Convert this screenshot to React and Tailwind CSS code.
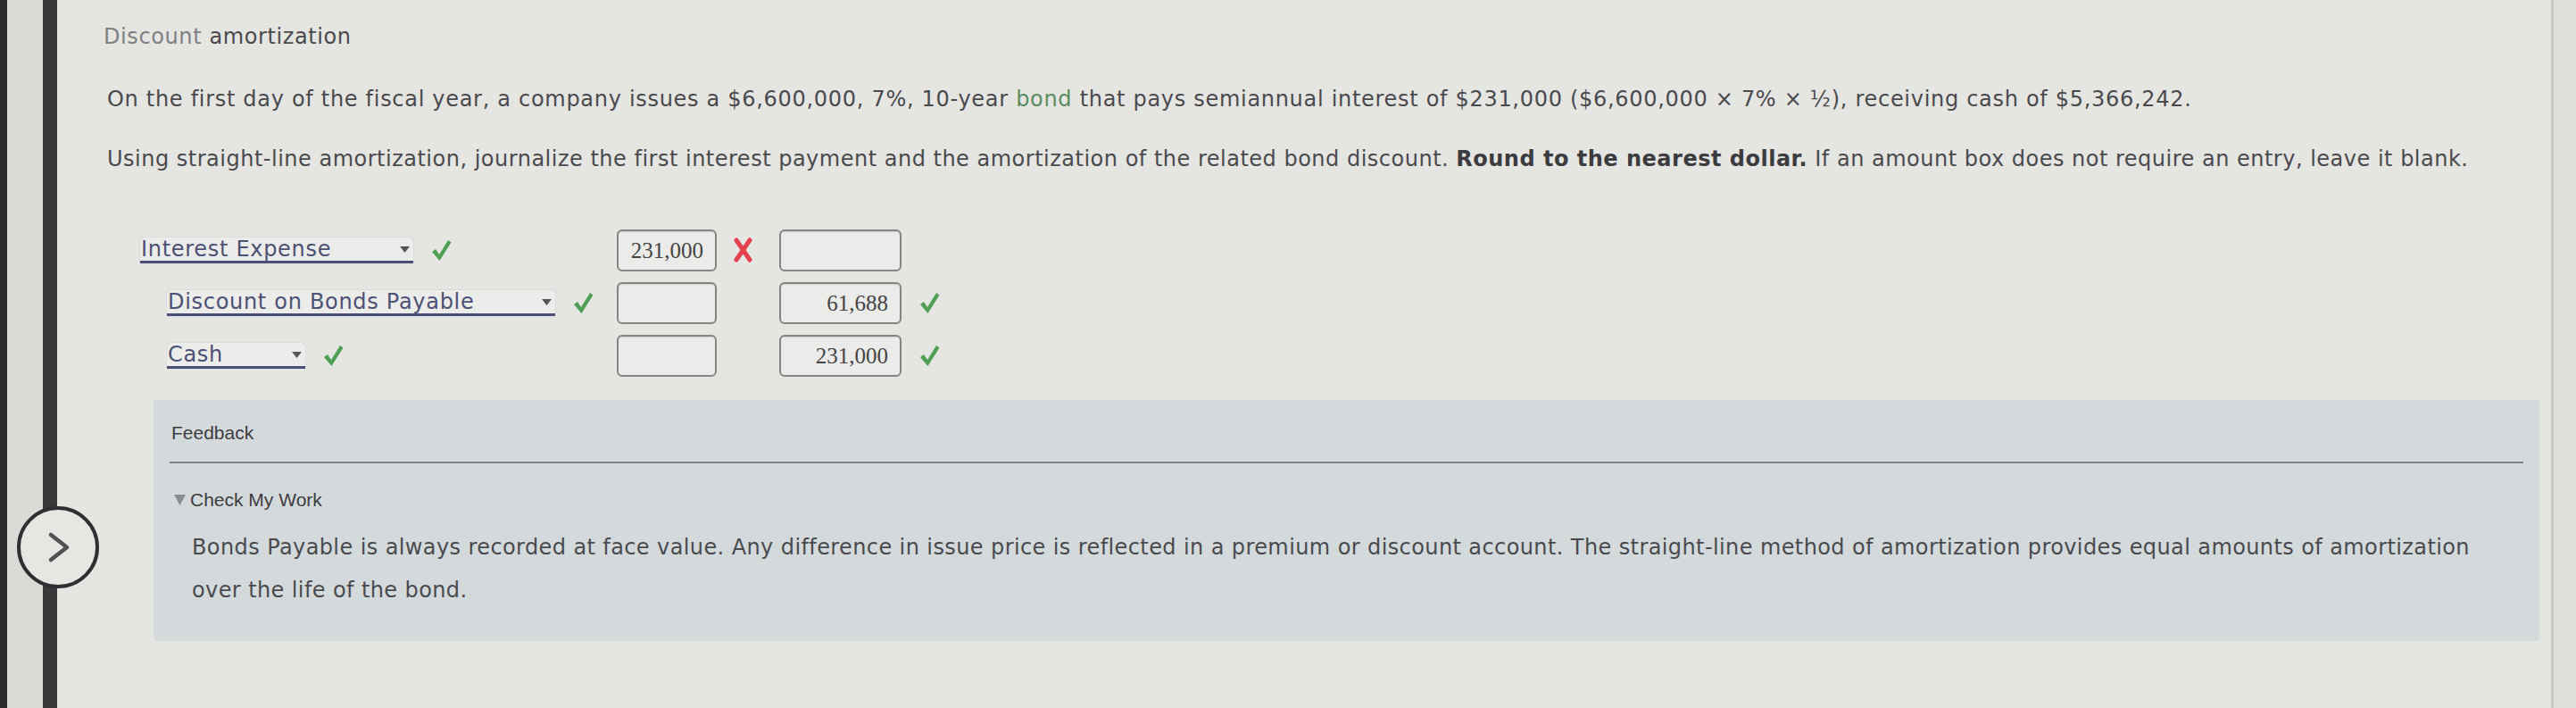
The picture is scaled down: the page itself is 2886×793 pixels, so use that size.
import React from "react";

const sans = { fontFamily: '"DejaVu Sans", Verdana, sans-serif' };
const arial = { fontFamily: '"Liberation Sans", Arial, sans-serif' };
const serif = { fontFamily: '"Liberation Serif", "Times New Roman", serif' };

function Check({ className = "" }) {
  return (
    <svg className={className} width="23" height="25" viewBox="0 0 23 25">
      <path d="M1 14 L5 11 L9 17 L19 1 L22.5 3.5 L9.5 24 Z" fill="#4f9f55" />
    </svg>
  );
}

function RedX({ className = "" }) {
  return (
    <svg className={className} width="21" height="28" viewBox="0 0 21 28">
      <path d="M3 3 L18 25 M18 3 L3 25" stroke="#e4404e" strokeWidth="5" strokeLinecap="round" />
    </svg>
  );
}

function Select({ label, width }) {
  return (
    <div
      className="relative flex items-center h-[29px] bg-[#ececeb] rounded-t-[4px] border-b-[3px] border-[#4b4f78] shadow-[0_0_1px_rgba(0,0,0,0.35)]"
      style={{ width }}
    >
      <span className="text-[24px] tracking-[0.7px] leading-none text-[#4d5174] pl-[1px]" style={sans}>
        {label}
      </span>
      <svg className="absolute right-[4px] top-[10px]" width="11" height="7" viewBox="0 0 11 7">
        <path d="M0 0 L11 0 L5.5 7 Z" fill="#555" />
      </svg>
    </div>
  );
}

function Box({ width, value }) {
  return (
    <div
      className="h-[47px] flex items-center justify-end pr-[13px] rounded-[6px] border-2 border-[#858585] bg-[#ebebea] shadow-[inset_0_1px_1px_rgba(0,0,0,0.12)]"
      style={{ width }}
    >
      <span className="text-[25px] leading-none text-[#444]" style={serif}>
        {value}
      </span>
    </div>
  );
}

function Row({ indent, label, selWidth, selCheck, a, aX, b, bCheck }) {
  return (
    <div className="flex items-center h-[48px]">
      <div className="w-[534px] flex items-center" style={{ paddingLeft: indent }}>
        <Select label={label} width={selWidth} />
        {selCheck && <Check className="ml-[20px]" />}
      </div>
      <Box width={112} value={a} />
      <div className="w-[70px] flex items-center">
        {aX && <RedX className="ml-[19px]" />}
      </div>
      <Box width={137} value={b} />
      {bCheck && <Check className="ml-[20px]" />}
    </div>
  );
}

export default function App() {
  return (
    <div className="relative w-[2886px] h-[793px] overflow-hidden flex bg-[#e5e5e2]">
      <div className="w-[8px] bg-[#2a2a2d]" />
      <div className="w-[40px] bg-[#dadad6]" />
      <div className="w-[16px] bg-[#38383b]" />

      <div className="flex-1 flex flex-col text-[#4a4a4e]" style={sans}>
        <div className="pt-[26px] pl-[52px] text-[24px] tracking-[0.6px] leading-[30px] whitespace-nowrap">
          <span className="text-[#808082]">Discount</span> amortization
        </div>
        <div className="mt-[40px] pl-[56px] text-[24px] tracking-[0.7px] leading-[30px] whitespace-nowrap">
          On the first day of the fiscal year, a company issues a $6,600,000, 7%, 10-year{" "}
          <span className="text-[#5b8d5d]">bond</span> that pays semiannual interest of $231,000 ($6,600,000 × 7% × ½), receiving cash of $5,366,242.
        </div>
        <div className="mt-[37px] pl-[56px] text-[24px] tracking-[0.5px] leading-[30px] whitespace-nowrap">
          Using straight-line amortization, journalize the first interest payment and the amortization of the related bond discount.{" "}
          <span className="font-bold text-[#3c3c40]">Round to the nearest dollar.</span> If an amount box does not require an entry, leave it blank.
        </div>

        <div className="mt-[63px] ml-[93px] flex flex-col gap-[11px]">
          <Row indent={0} label="Interest Expense" selWidth={306} selCheck a="231,000" aX b="" />
          <Row indent={30} label="Discount on Bonds Payable" selWidth={435} selCheck a="" b="61,688" bCheck />
          <Row indent={30} label="Cash" selWidth={155} selCheck a="" b="231,000" bCheck />
        </div>

        <div className="mt-[26px] ml-[108px] w-[2673px] rounded-[4px] bg-[#d4dadc] pt-[25px] pb-[33px]">
          <div className="pl-[20px] text-[21px] leading-[24px] text-[#3c3c40]" style={arial}>
            Feedback
          </div>
          <div className="mt-[20px] mx-[18px] h-[2px] bg-[#7d8286]" />
          <div className="mt-[29px] pl-[23px] flex items-center gap-[5px] text-[21px] leading-[24px] text-[#3c3c40]" style={arial}>
            <svg width="13" height="12" viewBox="0 0 13 12">
              <path d="M0 0 L13 0 L6.5 12 Z" fill="#8a8d90" />
            </svg>
            <span>Check My Work</span>
          </div>
          <div className="mt-[17px] pl-[43px] text-[24px] tracking-[0.4px] leading-[48px] text-[#4a4a4e]" style={sans}>
            <div className="whitespace-nowrap">
              Bonds Payable is always recorded at face value. Any difference in issue price is reflected in a premium or discount account. The straight-line method of amortization provides equal amounts of amortization
            </div>
            <div className="whitespace-nowrap">over the life of the bond.</div>
          </div>
        </div>
      </div>

      <div className="w-[3px] bg-[#c9c9c5]" />
      <div className="w-[25px] bg-[#dfdfdb]" />

      <div className="absolute left-[19px] top-[567px] w-[92px] h-[92px] rounded-full border-[4px] border-[#2f2f33] bg-[#e6e6e3] flex items-center justify-center">
        <svg width="40" height="44" viewBox="0 0 40 44">
          <path d="M12 8 L30 22 L12 36" fill="none" stroke="#505055" strokeWidth="4.5" strokeLinecap="round" strokeLinejoin="round" />
        </svg>
      </div>
    </div>
  );
}
